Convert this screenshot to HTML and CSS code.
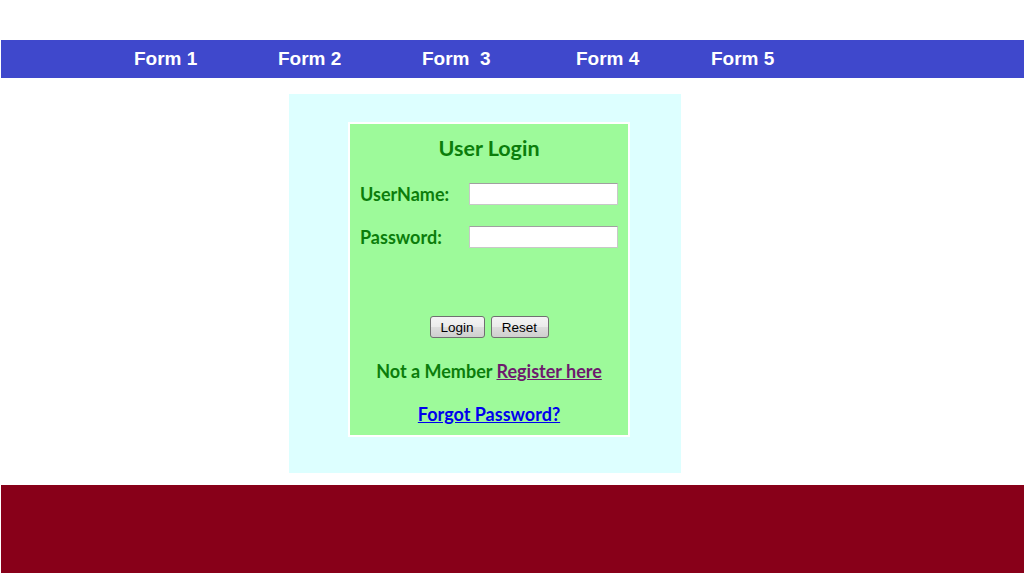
FILE: index.html
```html
<!DOCTYPE html>
<html>
<head>
<meta charset="utf-8">
<link rel="stylesheet" href="styles.css">
</head>
<body>
<div class="top"></div>
<nav class="nav">
  <a class="nav-item i1">Form 1</a>
  <a class="nav-item i2">Form 2</a>
  <a class="nav-item i3">Form&nbsp; 3</a>
  <a class="nav-item i4">Form 4</a>
  <a class="nav-item i5">Form 5</a>
</nav>
<main class="panel">
  <div class="login">
    <h2 class="title">User Login</h2>
    <div class="row"><label class="lbl">UserName:</label><input class="field" type="text"></div>
    <div class="row"><label class="lbl">Password:</label><input class="field" type="password"></div>
    <div class="buttons"><button class="btn b-login">Login</button><button class="btn b-reset">Reset</button></div>
    <p class="member">Not a Member <a class="reg">Register here</a></p>
    <p class="forgot"><a class="fp">Forgot Password?</a></p>
  </div>
</main>
<footer class="footer"></footer>
</body>
</html>
```
FILE: styles.css
```css
html, body { margin: 0; padding: 0; background: #fff; }
body { width: 1024px; height: 573px; overflow: hidden; }
.top { height: 40px; }
.nav {
  margin-left: 1px;
  height: 38px;
  background: #3f48cc;
  display: flex;
  align-items: center;
  padding-left: 133px;
  box-sizing: border-box;
}
.nav-item {
  font-family: "Liberation Sans", Arial, sans-serif;
  font-weight: bold;
  font-size: 19px;
  color: #fff;
  display: block;
}
.i1 { width: 144px; }
.i2 { width: 144px; }
.i3 { width: 154px; }
.i4 { width: 135px; }
.panel {
  margin: 16px 0 0 289px;
  width: 392px;
  height: 379px;
  background: #ddffff;
  padding: 28px 0 0 59px;
  box-sizing: border-box;
}
.login {
  width: 282px;
  height: 315px;
  box-sizing: border-box;
  border: 2px solid #fff;
  background: #9dfa9a;
  font-family: Lato, "Open Sans", sans-serif;
  color: #0b7d0b;
  padding: 0 10px 0 10px;
}
.title {
  margin: 11px 0 0 0;
  text-align: center;
  font-size: 21.5px;
  font-weight: bold;
  line-height: 26px;
}
.row {
  display: flex;
  align-items: center;
  height: 22px;
  margin-top: 22px;
}
.row + .row { margin-top: 21px; }
.lbl {
  font-size: 18px;
  font-weight: bold;
  width: 109px;
  line-height: 22px;
}
.field {
  width: 149px;
  height: 22px;
  box-sizing: border-box;
  border: 1px solid #c8c8c8;
  border-top-color: #a0a0a0;
  background: #fff;
  margin: 0;
  padding: 0;
}
.buttons {
  display: flex;
  justify-content: center;
  gap: 6px;
  margin-top: 68px;
}
.btn {
  font-family: "Liberation Sans", Arial, sans-serif;
  font-size: 13.5px;
  color: #000;
  height: 22px;
  border: 1px solid #707070;
  border-radius: 3px;
  background: linear-gradient(#f4f4f4 0%, #ebebeb 50%, #dddddd 51%, #cfcfcf 100%);
  padding: 0;
  margin: 0;
}
.b-login { width: 55px; }
.b-reset { width: 58px; }
.member {
  margin: 22px 0 0 0;
  text-align: center;
  font-size: 18px;
  font-weight: bold;
  line-height: 22px;
}
.reg { color: #6d1a6d; text-decoration: underline; }
.forgot {
  margin: 21px 0 0 0;
  text-align: center;
  font-size: 18px;
  font-weight: bold;
  line-height: 22px;
}
.fp { color: #0000ee; text-decoration: underline; }
.footer {
  margin: 12px 0 0 1px;
  height: 88px;
  background: #880019;
}
```
